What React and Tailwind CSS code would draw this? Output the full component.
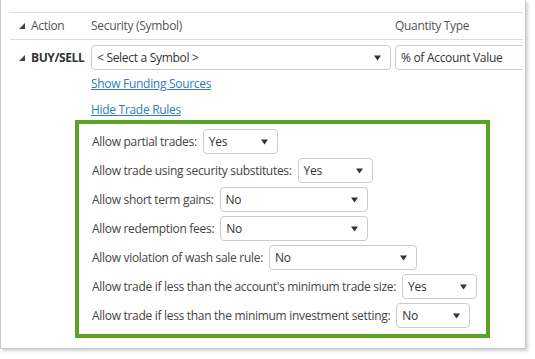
import React from 'react';

const rules = [
  { label: 'Allow partial trades:', value: 'Yes', width: 'w-[75px]' },
  { label: 'Allow trade using security substitutes:', value: 'Yes', width: 'w-[75px]' },
  { label: 'Allow short term gains:', value: 'No', width: 'w-[148px]' },
  { label: 'Allow redemption fees:', value: 'No', width: 'w-[148px]' },
  { label: 'Allow violation of wash sale rule:', value: 'No', width: 'w-[148px]' },
  { label: "Allow trade if less than the account's minimum trade size:", value: 'Yes', width: 'w-[75px]' },
  { label: 'Allow trade if less than the minimum investment setting:', value: 'No', width: 'w-[74px]' },
];

function Caret() {
  return (
    <svg width="7" height="6" viewBox="0 0 7 6" className="shrink-0">
      <polygon points="0,0.5 7,0.5 3.5,5.5" fill="#333" />
    </svg>
  );
}

function Corner() {
  return (
    <svg width="6" height="6" viewBox="0 0 6 6">
      <polygon points="6,0 6,6 0,6" fill="#444" />
    </svg>
  );
}

function Select({ value, className, caret = true }) {
  return (
    <div
      className={`flex h-[25px] shrink-0 items-center justify-between rounded-[4px] border border-[#cccccc] bg-white pl-[5px] pr-[9px] text-[#333] whitespace-nowrap ${className}`}
    >
      <span>{value}</span>
      {caret && <Caret />}
    </div>
  );
}

export default function App() {
  return (
    <div
      className="h-[359px] w-[535px] overflow-hidden bg-white text-[12px] tracking-[-0.3px] text-[#444]"
      style={{ fontFamily: '"Open Sans", "Noto Sans", sans-serif' }}
    >
      <div className="h-[349px] w-[526px] border border-t-0 border-[#c8c8c8] bg-white pl-[9px] pr-[2px] pt-[12px] shadow-[2px_2px_3px_rgba(0,0,0,0.18)]">
        <div className="overflow-hidden">
          {/* header */}
          <div className="flex h-[28px] items-center border-y border-[#dcdcdc] text-[#555]">
            <div className="flex w-[21px] shrink-0 justify-center pl-[2px]">
              <Corner />
            </div>
            <div className="w-[60px] shrink-0">Action</div>
            <div className="w-[304px] shrink-0">Security (Symbol)</div>
            <div className="shrink-0 whitespace-nowrap">Quantity Type</div>
          </div>

          {/* trade row */}
          <div className="flex items-center pt-[5px]">
            <div className="flex w-[21px] shrink-0 justify-center pl-[2px]">
              <Corner />
            </div>
            <div className="w-[60px] shrink-0 font-bold tracking-[-0.4px] text-[#333]">BUY/SELL</div>
            <Select value="< Select a Symbol >" className="w-[300px]" />
            <div className="ml-[4px] flex h-[25px] w-[140px] shrink-0 items-center rounded-[4px] border border-[#cccccc] pl-[5px] text-[#333] whitespace-nowrap">
              % of Account Value
            </div>
          </div>

          <div className="ml-[81px] flex flex-col items-start pt-[1px]">
            <a href="#" className="text-[#2d7cc1] underline leading-[26px]">Show Funding Sources</a>
            <a href="#" className="text-[#2d7cc1] underline leading-[26px]">Hide Trade Rules</a>
          </div>

          {/* trade rules */}
          <div className="ml-[65px] mt-[-3px] w-[415px] border-4 border-[#5ca128] pb-[6px] pl-[13px] pt-[5px]">
            <div className="flex flex-col gap-[4px]">
              {rules.map((r) => (
                <div key={r.label} className="flex items-center gap-[6px]">
                  <span className="whitespace-nowrap">{r.label}</span>
                  <Select value={r.value} className={r.width} />
                </div>
              ))}
            </div>
          </div>
        </div>
      </div>
    </div>
  );
}
